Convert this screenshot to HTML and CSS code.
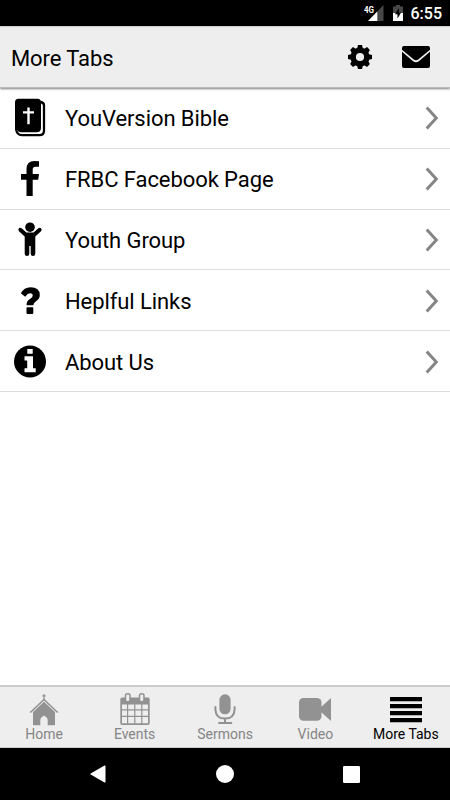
FILE: index.html
```html
<!DOCTYPE html>
<html lang="en">
<head>
    <meta charset="UTF-8">
    <meta name="viewport" content="width=device-width, initial-scale=1.0">
    <title>More Tabs</title>
    <link rel="stylesheet" href="styles.css">
</head>
<body>

    <!-- Status bar -->
    <div class="status-bar">
        <svg class="signal" width="20" height="18" viewBox="0 0 20 18">
            <path d="M19.5 1V17H4Z" fill="#484848"/>
            <path d="M13.3 7.4V17H4Z" fill="#fff"/>
            <text x="0" y="8.5" textLength="10" lengthAdjust="spacingAndGlyphs">4G</text>
        </svg>
        <svg class="battery" width="10" height="16" viewBox="0 0 10 16">
            <path d="M3 0H7V1.6H10V8H0V1.6H3Z" fill="#484848"/>
            <path d="M0 8H10V16H0Z" fill="#fff"/>
            <path d="M6 3L2 9.3H4.5V13.5L8 7.7H6Z" fill="#000"/>
        </svg>
        <span class="clock">6:55</span>
    </div>

    <!-- Header -->
    <header>
        <h1>More Tabs</h1>
        <svg class="gear" width="24" height="24" viewBox="0 0 24 24">
            <g fill="#000">
                <circle cx="12" cy="12" r="9.6"/>
                <path id="tooth" d="M9 4L10 0H14L15 4V20L14 24H10L9 20Z"/>
                <use href="#tooth" transform="rotate(45 12 12)"/>
                <use href="#tooth" transform="rotate(90 12 12)"/>
                <use href="#tooth" transform="rotate(135 12 12)"/>
            </g>
            <circle cx="12" cy="12" r="4.1" fill="#eee"/>
        </svg>
        <svg class="mail" width="28" height="22" viewBox="0 0 28 22">
            <path d="M2 0H26Q28 0 28 2V3.7L16.5 13.2Q14 15.3 11.5 13.2L0 3.7V2Q0 0 2 0Z"/>
            <path d="M0 5.8L10.8 15Q14 17.7 17.2 15L28 5.8V20Q28 22 26 22H2Q0 22 0 20Z"/>
        </svg>
    </header>

    <!-- List -->
    <ul class="tab-list">
        <li>
            <svg class="icon" viewBox="0 -.5 36 40">
                <path d="M6.5 .3H25.5Q29 .3 29 4V29.5Q29 33.7 24.5 33.7H9Q6 33.7 5.5 31.5L3 32V4Q3 .3 6.5 .3Z"/>
                <path d="M4.2 30Q4.5 36.7 10 36.7H27.5Q32 36.7 32 32V7Q32 4 28.5 3.5" fill="none" stroke="#000" stroke-width="2.3"/>
                <path d="M15.3 9H17.7V12.7H22V15H17.7V25.7H15.3V15H11V12.7H15.3Z" fill="#fff"/>
            </svg>
            <span>YouVersion Bible</span>
            <svg class="arrow" viewBox="0 0 14 24"><path d="M1.7 1.5L11.3 12L1.7 22.5"/></svg>
        </li>
        <li>
            <svg class="icon" viewBox="0 -.5 36 40">
                <path d="M27 1.7V7.3H23.5Q20.7 7.3 20.7 10V14.5H27L26.2 20.3H20.7V36.5H14.5V20.3H9V14.5H14.5V9.8Q14.5 1.5 22.5 1.5Q25.5 1.5 27 1.7Z"/>
            </svg>
            <span>FRBC Facebook Page</span>
            <svg class="arrow" viewBox="0 0 14 24"><path d="M1.7 1.5L11.3 12L1.7 22.5"/></svg>
        </li>
        <li>
            <svg class="icon" viewBox="0 0 36 40">
                <circle cx="18" cy="7.2" r="4.8"/>
                <path d="M7.2 8Q8.4 7.2 9.6 8.3L14.4 12.6H21.6L26.4 8.3Q27.6 7.2 29 8.2Q30.5 9.7 29 11.2L23.3 16.4V33.8Q23.3 36 21 36Q18.7 36 18.7 33.8V26H17.3V33.8Q17.3 36 15 36Q12.7 36 12.7 33.8V16.4L7 11.2Q5.4 9.4 7.2 8Z"/>
            </svg>
            <span>Youth Group</span>
            <svg class="arrow" viewBox="0 0 14 24"><path d="M1.7 1.5L11.3 12L1.7 22.5"/></svg>
        </li>
        <li>
            <svg class="icon" viewBox="0 0 36 40">
                <path d="M8.8 12.3Q12 6.2 18.5 6.2Q27.8 6.2 27.8 14Q27.8 17.8 24.3 20Q21.3 22 21.3 24.3H14.6Q14.2 19.8 18.3 17.8Q20.7 16.5 20.7 14.5Q20.7 12.3 18 12.3Q15.7 12.3 13.2 15.7Z"/>
                <rect x="14.5" y="26.2" width="6.8" height="6.7" rx=".8"/>
            </svg>
            <span>Heplful Links</span>
            <svg class="arrow" viewBox="0 0 14 24"><path d="M1.7 1.5L11.3 12L1.7 22.5"/></svg>
        </li>
        <li>
            <svg class="icon" viewBox="0 0 36 40">
                <circle cx="18" cy="19.5" r="16"/>
                <path d="M15.3 7H20.7V11.7H15.3ZM12.5 14.3H21V26.3H23.7V30.3H12.5V26.3H15.2V18.5H12.5Z" fill="#fff"/>
            </svg>
            <span>About Us</span>
            <svg class="arrow" viewBox="0 0 14 24"><path d="M1.7 1.5L11.3 12L1.7 22.5"/></svg>
        </li>
    </ul>

    <!-- Bottom tabs -->
    <nav class="tabs">
        <a>
            <svg viewBox="0 0 36 34">
                <path d="M18 1V7M16.3 2.8H19.7" stroke="#929292" stroke-width="1.2"/>
                <path d="M4.3 19.5L18 6.5L31.7 19.5" fill="none" stroke="#929292" stroke-width="1.6"/>
                <path d="M18 8.8L29 19V32.3H21.7V27Q21.5 24.5 18 22.5Q14.5 24.5 14.3 27V32.3H7V19Z"/>
            </svg>
            <span>Home</span>
        </a>
        <a>
            <svg viewBox="0 0 36 34">
                <path d="M5 4.5H31Q32.7 4.5 32.7 6.5V30Q32.7 32 31 32H5Q3.3 32 3.3 30V6.5Q3.3 4.5 5 4.5Z"/>
                <path d="M5 11.5H10V16.3H5ZM11.2 11.5H17.2V16.3H11.2ZM18.4 11.5H24.2V16.3H18.4ZM25.4 11.5H31V16.3H25.4ZM5 17.6H10V22.8H5ZM11.2 17.6H17.2V22.8H11.2ZM18.4 17.6H24.2V22.8H18.4ZM25.4 17.6H31V22.8H25.4ZM5 24.1H10V30.3H5ZM11.2 24.1H17.2V30.3H11.2ZM18.4 24.1H24.2V30.3H18.4ZM25.4 24.1H31V30.3H25.4Z" fill="#eee"/>
                <g fill="#eee" stroke="#929292" stroke-width="1.5">
                    <rect x="8.5" y=".8" width="4.5" height="8" rx="2"/>
                    <rect x="22.5" y=".8" width="4.5" height="8" rx="2"/>
                </g>
            </svg>
            <span>Events</span>
        </a>
        <a>
            <svg viewBox="0 0 36 34">
                <rect x="12.4" y="1.3" width="11.2" height="20" rx="5.4"/>
                <path d="M8.4 14V16.5Q8.8 25.6 18 25.6Q27.2 25.6 27.6 16.5V14M18 25.6V30M12 30H24.3" fill="none" stroke="#929292" stroke-width="2" stroke-linecap="round"/>
            </svg>
            <span>Sermons</span>
        </a>
        <a>
            <svg viewBox="0 0 36 34">
                <rect x="2" y="5" width="22.5" height="22.7" rx="4.5"/>
                <path d="M24 14L34 5V28L24 19Z"/>
            </svg>
            <span>Video</span>
        </a>
        <a class="active">
            <svg viewBox="0 0 36 34">
                <path d="M2 4H34V8.3H2ZM2 11H34V15.3H2ZM2 18H34V22.3H2ZM2 25H34V29.3H2Z"/>
            </svg>
            <span>More Tabs</span>
        </a>
    </nav>

    <!-- Android buttons -->
    <div class="nav-buttons">
        <svg width="16" height="18" viewBox="0 0 16 18"><path d="M14.5 .6Q15.5 .2 15.5 1.4V16.6Q15.5 17.8 14.5 17.4L.7 9.6Q0 9 .7 8.4Z"/></svg>
        <svg width="18" height="18" viewBox="0 0 18 18"><circle cx="9" cy="9" r="9"/></svg>
        <svg width="17" height="17" viewBox="0 0 17 17"><rect width="17" height="17" rx="1.2"/></svg>
    </div>

</body>
</html>
```
FILE: styles.css
```css
* {
    box-sizing: border-box;
}

body {
    display: flex;
    flex-direction: column;
    height: 800px;
    margin: 0;
    background-color: #fff;
    color: #000;
    font-family: Roboto, Arial, sans-serif;
    overflow: hidden;
}

svg {
    display: block;
    flex-shrink: 0;
}

/* Status bar */
.status-bar {
    display: flex;
    justify-content: flex-end;
    height: 26px;
    padding: 4px 8px 0 0;
    background-color: #000;
    color: #fff;
}

.signal text {
    fill: #fff;
    font-size: 9.5px;
    font-weight: bold;
}

.battery {
    margin: 1px 8px 0 9px;
}

.clock {
    font-size: 16px;
    font-weight: 500;
    line-height: 20px;
}

/* Header */
header {
    display: flex;
    align-items: center;
    height: 62px;
    padding: 0 20px 0 11px;
    background-color: #eee;
    border-top: 1px solid #ccc;
    border-bottom: 1px solid #bbb;
    box-shadow: 0 1px 2px rgba(0, 0, 0, 0.5);
}

h1 {
    flex: 1;
    margin: 0;
    padding-top: 2px;
    font-size: 22px;
    font-weight: normal;
    letter-spacing: -0.1px;
}

.mail {
    margin-left: 30px;
}

/* List */
.tab-list {
    flex: 1;
    margin: 0;
    padding: 0;
    list-style: none;
}

.tab-list li {
    display: flex;
    align-items: center;
    height: 60.8px;
    padding: 1px 11px 0 12px;
    border-bottom: 1px solid #ddd;
    font-size: 22px;
    letter-spacing: -0.08px;
}

.tab-list span {
    flex: 1;
    margin-left: 17px;
    padding-top: 1px;
}

.icon {
    width: 36px;
    height: 40px;
}

.arrow {
    width: 14px;
    height: 24px;
    fill: none;
    stroke: #858585;
    stroke-width: 3;
}

/* Bottom tabs */
.tabs {
    display: flex;
    height: 63px;
    margin: 0 -1px;
    padding-top: 6px;
    background-color: #eee;
    border-top: 2px solid #ccc;
    border-bottom: 1px solid #ccc;
}

.tabs a {
    display: flex;
    flex: 1;
    flex-direction: column;
    align-items: center;
    color: #858585;
    font-size: 14px;
    line-height: 14px;
    fill: #929292;
}

.tabs svg {
    width: 36px;
    height: 34px;
}

.tabs .active {
    color: #000;
    fill: #000;
}

/* Android buttons */
.nav-buttons {
    display: flex;
    align-items: center;
    justify-content: space-between;
    height: 52px;
    padding: 0 90px;
    background-color: #000;
    fill: #fff;
}
```
